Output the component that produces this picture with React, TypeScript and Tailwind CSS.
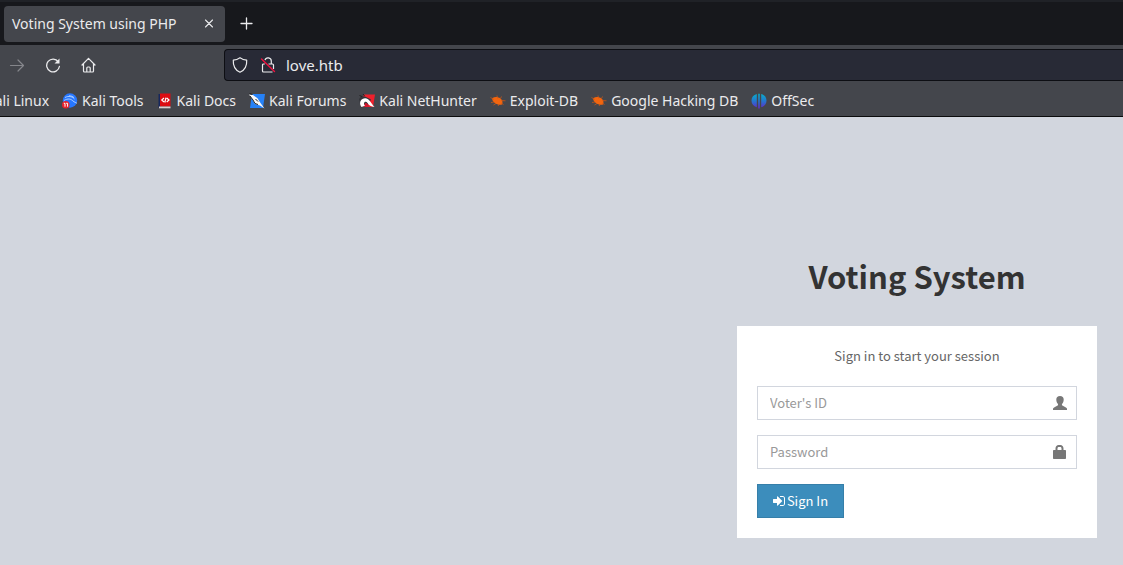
import type { ReactNode } from "react";

function ToolsIcon() {
  return (
    <svg viewBox="0 0 16 16" className="size-4 shrink-0" aria-hidden="true">
      <circle cx="8" cy="7.500" r="7.200" fill="#2777ff" />
      <path d="M3 4.500c4-2 7-1 9.500 1.500M2 7.500c4-2.500 7-1.500 9 .5 1.500 1.500 3 1.200 4 2.500M7 2.800c2 0 4 .7 5 2" fill="none" stroke="#b9d6ff" strokeWidth="0.900" />
      <circle cx="3.800" cy="11.800" r="3.800" fill="#e8232b" />
      <path d="M1.800 10.300H3v3.400M4.200 10.300h1.400v3.400" fill="none" stroke="#fff" strokeWidth="1" />
    </svg>
  );
}

function DocsIcon() {
  return (
    <svg viewBox="0 0 16 16" className="size-4 shrink-0" aria-hidden="true">
      <path d="M1.500 1h2v14h-2z" fill="#16275c" />
      <path d="M3 .5h10.500v13H3z" fill="#dc0c12" />
      <path d="M2 13.500h11.500v1.800H2z" fill="#d9cfcf" />
      <path d="M7 5 4.800 7l2.200 2M9.800 5 12 7l-2.300 2M9 4.700 7.800 9.500" fill="none" stroke="#fff" strokeWidth="1.200" />
    </svg>
  );
}

function ForumsIcon() {
  return (
    <svg viewBox="0 0 16 16" className="size-4 shrink-0" aria-hidden="true">
      <path d="M3 1h13l-2 14H1z" fill="#2581f7" />
      <path d="M0 1.500 4 2l4.500 3.200L11.500 10l4 5.500-4.500-3-5-1.500-3-5z" fill="#f7f7f7" />
      <path d="m.5.500 3 1M1 3l3 4 2 3.500 3 1M6.500 6l2.500 2.500" fill="none" stroke="#222" strokeWidth="1" />
    </svg>
  );
}

function NetHunterIcon() {
  return (
    <svg viewBox="0 0 16 16" className="size-4 shrink-0" aria-hidden="true">
      <path d="M5 1.500h11L14 14H2L1 8z" fill="#f0202c" />
      <path d="M0 6 2.500 3 6 3.500l6 3L9 12l-7 2.500z" fill="#33343a" />
      <path d="M2.500 14C-.5 10 1.500 5.500 6 5.300c4-.2 5 3.700 9.500 8.700-3.500-.3-5.500-1.500-7-4-1-1.800-3.500-1.500-3.500.5 0 1 .5 1.500 1.500 2z" fill="#fff" />
      <path d="M5.500 11c.5-1.500 2-1.500 3 0l2 2.800H6z" fill="#d4162e" />
      <path d="m.5 2.500 2.500 1M4 1l1.500 2" stroke="#222" strokeWidth="1" />
    </svg>
  );
}

function BugIcon() {
  return (
    <svg viewBox="0 0 16 16" className="size-4 shrink-0" aria-hidden="true">
      <path d="M2.500 5c2-1.500 5.500-1.500 8 .5C12.500 7 13 9.500 12 11.500c-2 .8-5 .2-7.500-1.700C2.500 8.200 1.800 6.500 2.500 5z" fill="#f2650f" />
      <path d="M.5 4.500 4 6.500M7 2.500l.5 3M10.500 5.500l1-2M11 7.500l4.500.3M11 10l2.500 1.500M4 9l-3 .5M6 10.500 3.500 12M9 11.500 8 13" stroke="#d9580f" strokeWidth="0.700" />
    </svg>
  );
}

function OffSecIcon() {
  return (
    <svg viewBox="0 0 16 16" className="size-4 shrink-0" aria-hidden="true">
      <defs>
        <linearGradient id="offsec" x1="0" y1="0" x2="0" y2="1">
          <stop offset="0" stopColor="#08aec9" />
          <stop offset="0.500" stopColor="#2476cf" />
          <stop offset="1" stopColor="#6427c9" />
        </linearGradient>
      </defs>
      <path d="M5.800.9v13.400C2.500 13.300.5 11 .5 7.500S2.500 1.700 5.800.9zM7.200.7h1.600v14.800H7.200zM10.200.9c3.300.8 5.300 3.100 5.300 6.600s-2 5.800-5.300 6.800z" fill="url(#offsec)" />
    </svg>
  );
}

const bookmarks: { label: string; icon: ReactNode }[] = [
  { label: "Kali Tools", icon: <ToolsIcon /> },
  { label: "Kali Docs", icon: <DocsIcon /> },
  { label: "Kali Forums", icon: <ForumsIcon /> },
  { label: "Kali NetHunter", icon: <NetHunterIcon /> },
  { label: "Exploit-DB", icon: <BugIcon /> },
  { label: "Google Hacking DB", icon: <BugIcon /> },
  { label: "OffSec", icon: <OffSecIcon /> },
];

function TabStrip() {
  return (
    <div className="flex h-[45px] items-center border-t-2 border-[#202227] bg-[#17181c] px-1">
      <div className="flex h-9 w-[221px] items-center justify-between rounded bg-[#44464c] px-2">
        <span className="text-[14px] whitespace-nowrap">Voting System using PHP</span>
        <button type="button" aria-label="Close tab" className="flex size-4 items-center justify-center">
          <svg viewBox="0 0 16 16" className="size-4" fill="none" stroke="currentColor" strokeWidth="1.100" strokeLinecap="round">
            <path d="m4.500 4 7 7M11.500 4l-7 7" />
          </svg>
        </button>
      </div>
      <button type="button" aria-label="New tab" className="ml-3 flex size-5 items-center justify-center">
        <svg viewBox="0 0 20 20" className="size-5" fill="none" stroke="currentColor" strokeWidth="1.300" strokeLinecap="round">
          <path d="M9.500 4v11M4 9.500h11" />
        </svg>
      </button>
    </div>
  );
}

function NavBar() {
  return (
    <div className="flex h-10 items-center bg-[#44464c]">
      <div className="flex w-56 shrink-0 items-center gap-5 pl-[9px]">
        <button type="button" aria-label="Forward" disabled className="text-[#85868b]">
          <svg viewBox="0 0 16 16" className="size-4" fill="none" stroke="currentColor" strokeWidth="1.200" strokeLinecap="round" strokeLinejoin="round">
            <path d="M1.500 8.500h13M9 3l5.500 5.500L9 14" />
          </svg>
        </button>
        <button type="button" aria-label="Reload">
          <svg viewBox="0 0 16 16" className="size-4" fill="none" stroke="currentColor" strokeWidth="1.300" strokeLinecap="round">
            <path d="M13.300 4.800A6.400 6.400 0 1 0 14.400 9.500" />
            <path d="M14.500 1.500v5h-5z" fill="currentColor" stroke="none" />
          </svg>
        </button>
        <button type="button" aria-label="Home">
          <svg viewBox="0 0 16 16" className="size-4" fill="none" stroke="currentColor" strokeWidth="1.200" strokeLinecap="round" strokeLinejoin="round">
            <path d="m1 8 6.500-6.700L14 8M2.500 7v7c0 .6.4 1 1 1h8c.6 0 1-.4 1-1V7M5.800 15v-4c0-.6.4-1 1-1h1.400c.6 0 1 .4 1 1v4" />
          </svg>
        </button>
      </div>
      <div className="flex h-8 min-w-0 flex-1 items-center rounded-l border border-r-0 border-[#0d0e13] bg-[#282a36] pl-[7px]">
        <svg viewBox="0 0 16 16" className="size-4 shrink-0" fill="none" stroke="currentColor" strokeWidth="1.200" strokeLinejoin="round" aria-hidden="true">
          <path d="M8 .8c2 1.500 4.300 2.300 6.700 2.400C15 8 13 13 8 15.200 3 13 1 8 1.300 3.200 3.700 3.100 6 2.300 8 .8z" />
        </svg>
        <svg viewBox="0 0 16 16" className="ml-3 size-4 shrink-0" fill="none" aria-hidden="true">
          <path d="M5 3.200A3.200 3.200 0 0 1 11.300 4v3H12.500c.6 0 1 .4 1 1v4M4.800 7H3.500c-.6 0-1 .4-1 1v6c0 .6.4 1 1 1h9M8.500 7h3" stroke="currentColor" strokeWidth="1.200" />
          <path d="m1.500 2 13 12.500" stroke="#f0113f" strokeWidth="1.400" strokeLinecap="round" />
        </svg>
        <input aria-label="Address" defaultValue="love.htb" className="ml-[10px] min-w-0 flex-1 bg-transparent text-[15px] outline-none" />
      </div>
    </div>
  );
}

function BookmarksBar() {
  return (
    <nav aria-label="Bookmarks" className="flex h-8 items-center gap-[13px] overflow-hidden border-b border-[#0c0c0d] bg-[#44464c] text-[14px]">
      <a href="#" className="-ml-[14px] whitespace-nowrap">Kali Linux</a>
      {bookmarks.map(({ label, icon }) => (
        <a key={label} href="#" className="flex items-center gap-1 whitespace-nowrap">
          {icon}
          {label}
        </a>
      ))}
    </nav>
  );
}

const fieldClass =
  "h-[34px] w-full border border-[#d2d6de] bg-white pr-[42px] pb-[2px] pl-3 text-[13px] text-[#555] outline-none placeholder:text-[#999] placeholder:opacity-100";

function LoginPage() {
  return (
    <main className="flex-1 bg-[#d2d6de] px-[26px] pt-[134px] pb-[27px] font-['Noto_Sans_CJK_JP','Liberation_Sans',sans-serif] text-[13px] leading-5">
      <div className="ml-auto w-full max-w-[360px]">
        <h1 className="mb-[26px] text-center text-[31px] leading-[49px] font-bold text-[#333]">Voting System</h1>
        <form className="bg-white p-5" onSubmit={(event) => event.preventDefault()}>
          <p className="mb-5 text-center text-[#666]">Sign in to start your session</p>
          <div className="relative mb-[15px]">
            <input type="text" aria-label="Voter's ID" placeholder="Voter's ID" className={fieldClass} />
            <svg viewBox="0 0 14 14" className="pointer-events-none absolute top-[10px] right-[10px] size-[14px]" fill="#777" aria-hidden="true">
              <path d="M7 0c2.400 0 3.700 1.400 3.700 3.500 0 2-.6 3.200-1.500 4.300-.4.500-.4 1.500.2 1.800l3.100 1.600c1 .5 1.500 1 1.500 2V14H0v-.8c0-1 .5-1.500 1.500-2l3.100-1.600c.6-.3.6-1.300.2-1.800-.9-1.100-1.500-2.300-1.500-4.300C3.300 1.400 4.600 0 7 0z" />
            </svg>
          </div>
          <div className="relative mb-[15px]">
            <input type="password" aria-label="Password" placeholder="Password" className={fieldClass} />
            <svg viewBox="0 0 14 14" className="pointer-events-none absolute top-[10px] right-[10px] size-[14px]" fill="#777" aria-hidden="true">
              <path fillRule="evenodd" d="M2.500 5V3.500C2.500 1.500 4 0 5.500 0h2c1.500 0 3 1.500 3 3.500V5h1.500c.6 0 1 .4 1 1v7c0 .6-.4 1-1 1H1c-.6 0-1-.4-1-1V6c0-.6.4-1 1-1zm2 0h4V3.500C8.500 2.500 8 2 7.200 2H5.800c-.8 0-1.300.5-1.300 1.500z" />
            </svg>
          </div>
          <button type="submit" className="flex h-[34px] w-[87px] items-center justify-center gap-[2px] border border-[#367fa9] bg-[#3c8dbc] text-white">
            <svg viewBox="0 0 1536 1536" className="size-3" fill="currentColor" aria-hidden="true">
              <path d="M1184 768q0 26-19 45l-544 544q-19 19-45 19t-45-19-19-45v-288H64q-26 0-45-19t-19-45V576q0-26 19-45t45-19h448V224q0-26 19-45t45-19 45 19l544 544q19 19 19 45zm352-352v704q0 119-84.500 203.500T1248 1408H928q-13 0-22.500-9.500T896 1376q0-4-1-20t-.5-26.500 3-23.500 10-19.500T928 1280h320q66 0 113-47t47-113V416q0-66-47-113t-113-47H936l-11.500-1-11.500-3-8-5.500-7-9-2-13.500q0-4-1-20t-.5-26.500 3-23.500 10-19.500T928 128h320q119 0 203.500 84.500T1536 416z" />
            </svg>
            Sign In
          </button>
        </form>
      </div>
    </main>
  );
}

export default function App() {
  return (
    <div className="flex min-h-screen flex-col font-['Noto_Sans','Liberation_Sans',sans-serif] text-[#ebebed]">
      <header>
        <TabStrip />
        <NavBar />
        <BookmarksBar />
      </header>
      <LoginPage />
    </div>
  );
}
